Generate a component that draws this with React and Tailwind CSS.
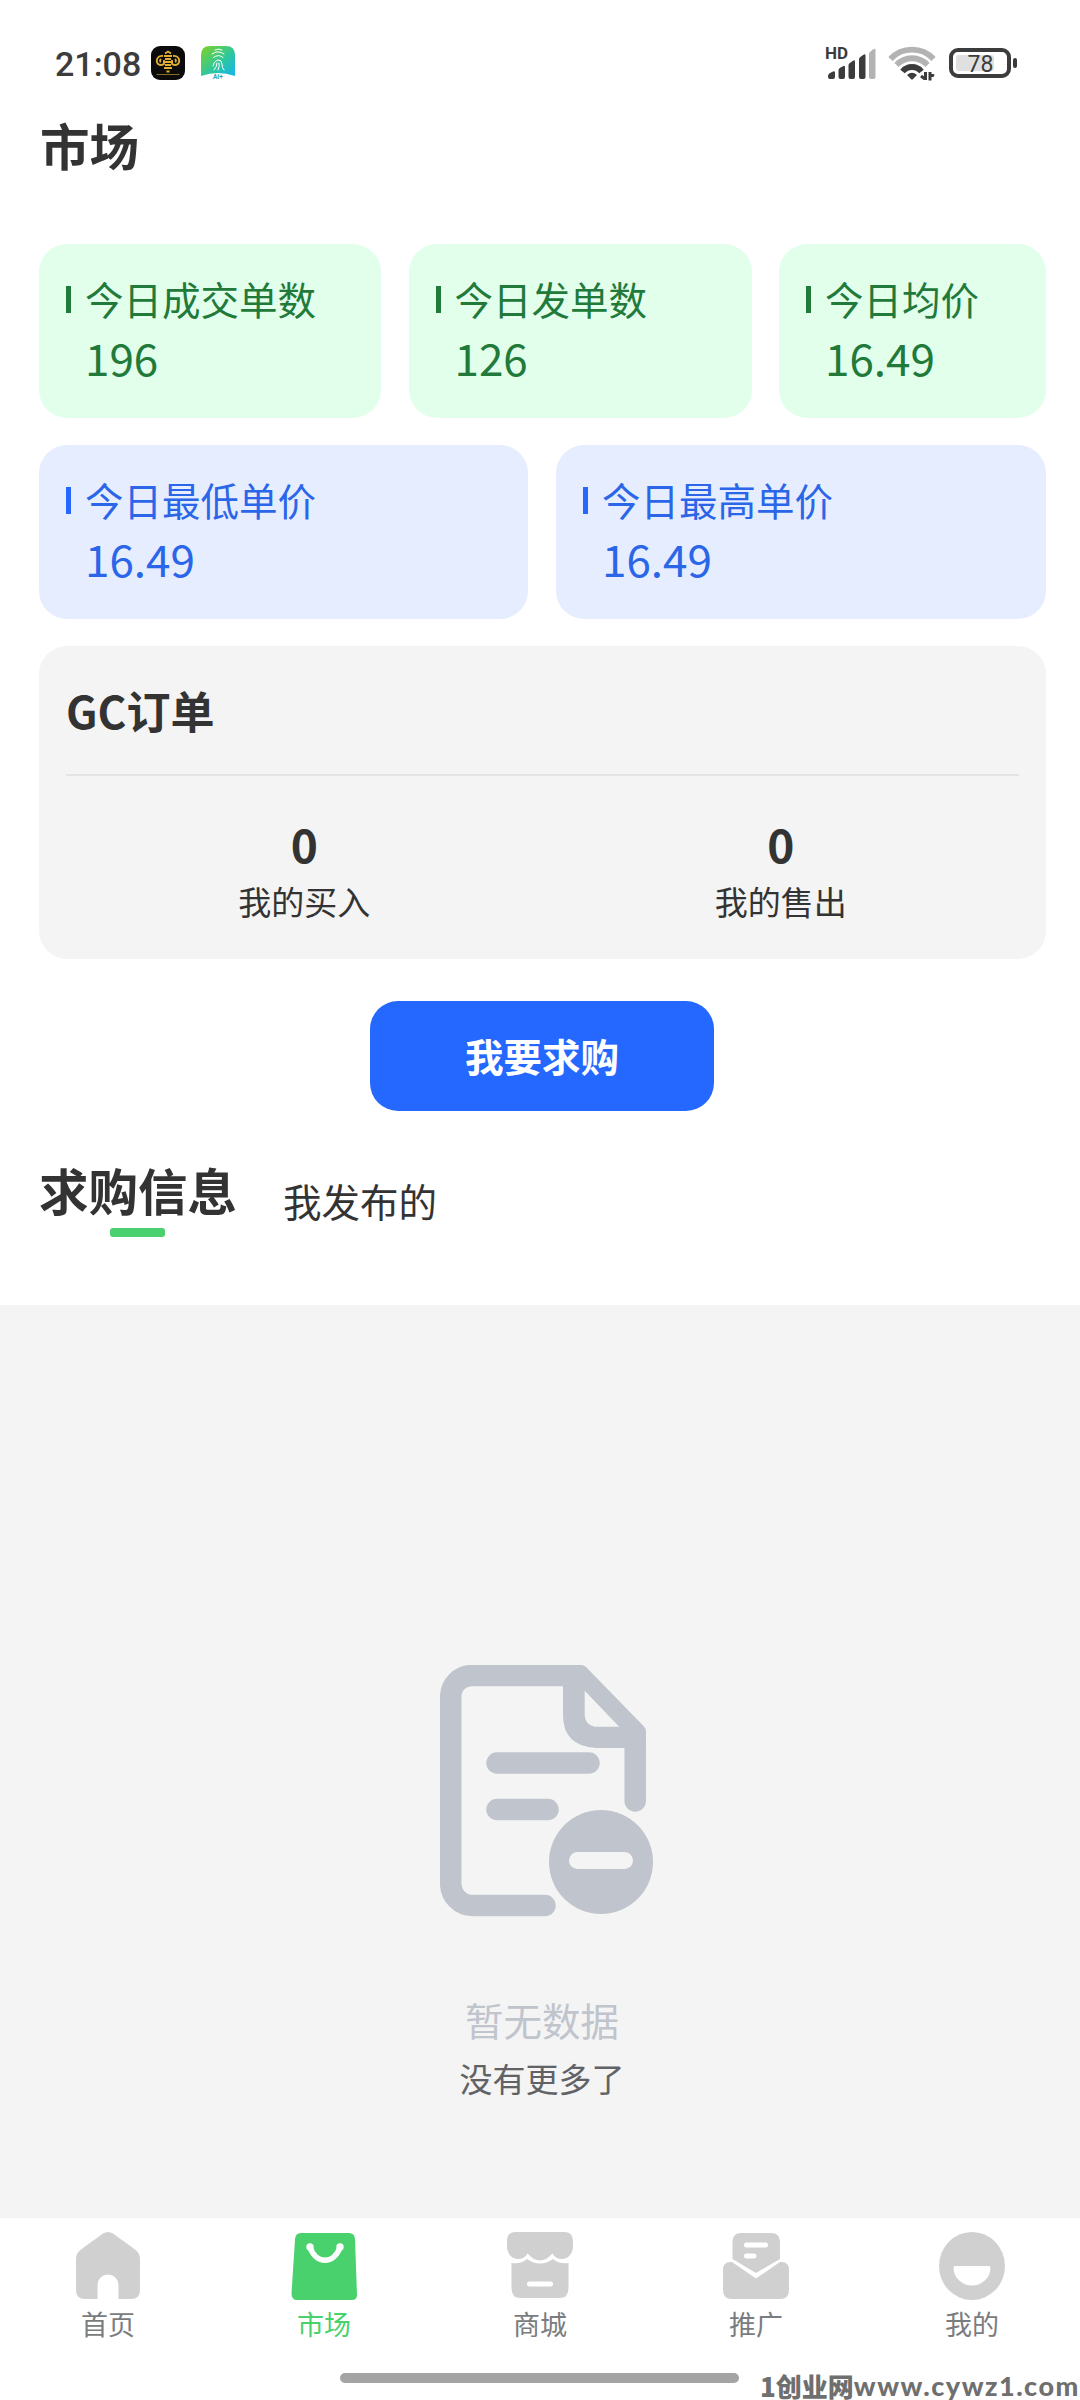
import React, { useState } from 'react';

const greenStats = [
  { label: '今日成交单数', value: '196', width: 'w-[342px]' },
  { label: '今日发单数', value: '126', width: 'w-[343px]' },
  { label: '今日均价', value: '16.49', width: 'w-[267px]' },
];

const blueStats = [
  { label: '今日最低单价', value: '16.49', width: 'w-[489px]' },
  { label: '今日最高单价', value: '16.49', width: 'w-[490px]' },
];

const orders = [
  { label: '我的买入', count: 0 },
  { label: '我的售出', count: 0 },
];

function SignalIcon() {
  return (
    <svg width="56" height="40" viewBox="0 0 56 40" fill="#3c3c3c">
      <text x="4" y="17" fontSize="17" fontWeight="700" fontFamily="Roboto, sans-serif">HD</text>
      <path d="M7 34q0-2 2-3l3-1.500q2-1 2 1V35q0 2-2 2H9q-2 0-2-2z" />
      <path d="M17.500 28q0-1.500 2-2.500l2.500-1.300q2-1 2 1V35q0 2-2 2h-2.500q-2 0-2-2z" />
      <path d="M27.500 23q0-1.500 2-2.500l2.500-1.800q2-1 2 1V35q0 2-2 2h-2.500q-2 0-2-2z" />
      <path d="M38 17q0-1.500 2-2.500l2.500-1.800q2-1 2 1V35q0 2-2 2H40q-2 0-2-2z" />
      <path fill="#b3b3b3" d="M48 12q0-1.500 2-3l2.500-1.800q2-1 2 1V35q0 2-2 2H50q-2 0-2-2z" />
    </svg>
  );
}

function WifiIcon() {
  return (
    <svg width="48" height="40" viewBox="0 0 48 40" fill="none" strokeWidth="5.800">
      <path stroke="#b3b3b3" d="M2.500 17C14 4.500 34 4.500 45.500 17" />
      <path stroke="#b3b3b3" d="M8.500 23C17 14 31 14 39.500 23" />
      <path stroke="#3c3c3c" d="M14.500 29.500C19.500 23.500 28.500 23.500 33.500 29.500" />
      <path fill="#3c3c3c" d="M19 33q5-4.500 10 0l-4 4q-1 1-2 0z" />
      <path stroke="#3c3c3c" strokeWidth="3" d="M37.500 30v8M42 30v8.500M33 34l4 3M42 32l4 2" />
    </svg>
  );
}

function BatteryIcon() {
  return (
    <svg width="70" height="40" viewBox="0 0 70 40">
      <rect x="3" y="8" width="58" height="26" rx="7" fill="none" stroke="#3c3c3c" strokeWidth="4" />
      <rect x="8" y="13" width="38" height="16" rx="3" fill="#e0e0e0" />
      <rect x="65" y="16" width="4" height="10" rx="2" fill="#3c3c3c" />
      <text x="32.500" y="29.500" textAnchor="middle" fontSize="23" fontFamily="Roboto, sans-serif" fill="#3c3c3c">78</text>
    </svg>
  );
}

function BeeAppIcon() {
  return (
    <svg width="34" height="34" viewBox="0 0 34 34" fill="none" stroke="#e0ae32" strokeWidth="1.800">
      <rect width="34" height="34" rx="9" fill="#0b0b0c" stroke="none" />
      <path d="M14 7.500l3-2 3 2M13 10h8M14 13h6M12 16h10M14 19h6M13 22h8M15.500 25.500h3" />
      <path d="M12 10C7 9 4 14 7 18q3 2 6 0v-4M22 10c5-1 8 4 5 8q-3 2-6 0v-4M10 13q-2 2 0 3M24 13q2 2 0 3" />
      <path d="M5.500 28.500h23" strokeWidth=".6" />
    </svg>
  );
}

function FingerprintAppIcon() {
  return (
    <svg width="34" height="34" viewBox="0 0 34 34" fill="none">
      <defs>
        <linearGradient id="finger" x1="0" y1="0" x2="1" y2="1">
          <stop offset="0" stopColor="#7fd321" />
          <stop offset=".55" stopColor="#2fc79b" />
          <stop offset="1" stopColor="#14b4f0" />
        </linearGradient>
      </defs>
      <path d="M9 0h16q9 0 9 9v21Q17 24 0 30V9q0-9 9-9z" fill="url(#finger)" />
      <g stroke="#fff" strokeWidth="1" strokeLinecap="round">
        <path d="M14 4q3.500-2 7 0M11 8q6-4.500 12 0M12.500 11.500q5-4 9.500 0M12 20q1-5 5-6 4 0 4 4 0 4 2 6M13 24q3-3 3-7M18 17q1 3-1 7" />
      </g>
      <text x="12" y="33" fontSize="6.500" fontWeight="700" fontFamily="Roboto, sans-serif" fill="#2aa7a7">AI+</text>
    </svg>
  );
}

function EmptyIcon() {
  return (
    <svg width="214" height="252" viewBox="0 0 214 252" fill="none" stroke="#c0c4cc" strokeWidth="21.500" strokeLinecap="round">
      <path d="M105 240.500H32.500C20 240.500 10.700 230 10.700 219V32C10.700 20 20 10.500 32.500 10.500H134" />
      <path d="M195.200 136V75" />
      {/* folded corner */}
      <path
        fill="#c0c4cc"
        stroke="none"
        fillRule="evenodd"
        d="M123 0h18q3 0 5 2l57.500 59q2.500 2 2.500 6v16H156q-33-2-33-33zM144.700 25.700V51q1 9 10 10.700h24.500z"
      />
      <path d="M57 98h92M57 144.500h51" />
      <circle cx="161" cy="197" r="52" fill="#c0c4cc" stroke="none" />
      <path d="M137.500 195.500h47" stroke="#f4f4f4" strokeWidth="17" />
    </svg>
  );
}

function HomeIcon() {
  return (
    <svg width="66" height="68" viewBox="0 0 66 68" fill="currentColor">
      <path d="M28 1.500q5-3 10 0l22 16q5 4 5 9V58q0 9-9 9H43.500V53a10.500 10.500 0 0 0-21 0v14H10q-9 0-9-9V26.500q0-5 5-9z" />
    </svg>
  );
}

function BagIcon() {
  return (
    <svg width="66" height="68" viewBox="0 0 66 68" fill="currentColor">
      <path d="M10 1h48q5.500 0 6 6L66 63q0 5-5 5H6q-5 0-5.500-6L4 7q.5-6 6-6z" />
      <path d="M19 15.500c6.500 17 23.500 17 30 0" fill="none" stroke="#fff" strokeWidth="5.500" strokeLinecap="round" />
      <circle cx="19" cy="15" r="3.700" fill="#fff" />
      <circle cx="49" cy="15" r="3.700" fill="#fff" />
    </svg>
  );
}

function ShopIcon() {
  return (
    <svg width="66" height="68" viewBox="0 0 66 68" fill="currentColor">
      <path d="M9 0h48q9 0 9 9v5c0 14-15 17-20.500 7.500q-12.500 14-25 0C15 31 0 28 0 14V9q0-9 9-9z" />
      <path d="M4.500 31q9 1.500 15.500-4 13 9 26 0 6.500 5.500 15.500 4v25q0 10-9 10h-39q-9 0-9-10z" />
      <path d="M22.500 52h21" stroke="#fff" strokeWidth="5" strokeLinecap="round" />
    </svg>
  );
}

function MailIcon() {
  return (
    <svg width="66" height="68" viewBox="0 0 66 68" fill="currentColor">
      <path d="M18 1h30q9 0 9 9v17L33 41 9.500 27V10Q9.500 1 18 1z" />
      <path d="M9 30L33 46.500 57 30q9-1 9 8v20q0 9-9 9H9q-9 0-9-9V38q0-9 9-8z" />
      <path d="M23.500 13h19M23.500 24h7.500" stroke="#fff" strokeWidth="5" strokeLinecap="round" />
    </svg>
  );
}

function FaceIcon() {
  return (
    <svg width="66" height="68" viewBox="0 0 66 68" fill="currentColor">
      <ellipse cx="33" cy="34" rx="33" ry="34" />
      <path d="M16.500 34h33q2 0 2 2a18.500 17.500 0 0 1-37 0q0-2 2-2z" fill="#fff" />
    </svg>
  );
}

const navItems = [
  { key: 'home', label: '首页', icon: HomeIcon },
  { key: 'market', label: '市场', icon: BagIcon },
  { key: 'mall', label: '商城', icon: ShopIcon },
  { key: 'promote', label: '推广', icon: MailIcon },
  { key: 'mine', label: '我的', icon: FaceIcon },
];

function StatCard({ item, color }) {
  const isGreen = color === 'green';
  return (
    <div
      className={`h-[174px] rounded-[28px] pt-[30px] pl-[27px] ${item.width} ${
        isGreen ? 'bg-[#e2ffec] text-[#21793a]' : 'bg-[#e6edff] text-[#2b66e8]'
      }`}
    >
      <div className="flex items-center">
        <div className={`w-[5px] h-[27px] mt-0.5 mr-[14px] ${isGreen ? 'bg-[#21793a]' : 'bg-[#2668ff]'}`}></div>
        <span className="text-[38.5px] leading-[49px] whitespace-nowrap">{item.label}</span>
      </div>
      <div className="mt-1 pl-[19px] text-[44px] leading-[60px]">{item.value}</div>
    </div>
  );
}

export default function App() {
  const [activeNav, setActiveNav] = useState('market');

  return (
    <div className="relative w-[1080px] h-[2400px] overflow-hidden flex flex-col bg-white text-[#333333] font-['Noto_Sans_CJK_SC',sans-serif]">
      {/* Status bar */}
      <div className="flex items-center h-[112px] pt-3.5 pl-[55px] pr-[62px] text-[#3c3c3c]">
        <span className="w-[96px] pt-0.5 font-['Roboto',sans-serif] font-medium text-[34px] leading-10">21:08</span>
        <div className="flex gap-4">
          <BeeAppIcon />
          <FingerprintAppIcon />
        </div>
        <div className="flex items-start ml-auto pb-0.5">
          <SignalIcon />
          <div className="ml-[11px]"><WifiIcon /></div>
          <div className="ml-3"><BatteryIcon /></div>
        </div>
      </div>

      {/* Page title */}
      <h1 className="h-[132px] pt-px pl-[40px] text-[49.5px] leading-[63px] font-bold">市场</h1>

      {/* Today stats */}
      <div className="flex flex-col gap-[27px] pl-[39px] pr-[34px]">
        <div className="flex justify-between">
          {greenStats.map((item) => (
            <StatCard key={item.label} item={item} color="green" />
          ))}
        </div>
        <div className="flex justify-between">
          {blueStats.map((item) => (
            <StatCard key={item.label} item={item} color="blue" />
          ))}
        </div>

        {/* Orders */}
        <div className="h-[313px] rounded-[28px] bg-[#f4f4f4] px-[27px]">
          <h2 className="h-[130px] pt-[31px] text-[44px] leading-[66px] font-bold border-b-2 border-[#e4e4e4]">GC订单</h2>
          <div className="flex pt-[35px]">
            {orders.map((order) => (
              <div key={order.label} className="flex-1 flex flex-col items-center">
                <span className="text-[46px] leading-[64px] font-bold">{order.count}</span>
                <span className="mt-[2px] text-[33px] leading-[48px]">{order.label}</span>
              </div>
            ))}
          </div>
        </div>
      </div>

      <button className="w-[344px] h-[110px] mt-[42px] ml-[370px] rounded-[28px] bg-[#2468ff] text-white text-[38.5px] leading-[106px] pb-[3px] font-bold">
        我要求购
      </button>

      {/* Tabs */}
      <div className="flex items-start h-[194px] pt-[47px] pl-[39px]">
        <div className="flex flex-col items-center">
          <span className="text-[49.5px] leading-[63px] font-bold">求购信息</span>
          <div className="w-[55px] h-[9px] mt-[7px] mr-0.5 rounded-[3px] bg-[#4bd06f]"></div>
        </div>
        <span className="mt-[18px] ml-[46px] text-[38.5px] leading-[49px]">我发布的</span>
      </div>

      {/* Empty list */}
      <div className="flex flex-col items-center flex-1 bg-[#f4f4f4] pt-[360px] pl-1">
        <div className="ml-2.5"><EmptyIcon /></div>
        <p className="mt-[76px] text-[38.5px] leading-[53px] text-[#c0c4cc]">暂无数据</p>
        <p className="mt-[12px] text-[33px] leading-[40px] text-[#606266]">没有更多了</p>
      </div>

      {/* Bottom navigation */}
      <nav className="flex h-[155px] pt-3.5 bg-white">
        {navItems.map((item) => {
          const Icon = item.icon;
          const active = activeNav === item.key;
          return (
            <button key={item.key} onClick={() => setActiveNav(item.key)} className="flex-1 flex flex-col items-center">
              <span className={active ? 'text-[#48d16c]' : 'text-[#d0d0d0]'}><Icon /></span>
              <span className={`mt-1.5 text-[27px] leading-[36px] ${active ? 'text-[#48d16c]' : 'text-[#7a7c80]'}`}>{item.label}</span>
            </button>
          );
        })}
      </nav>
      <div className="flex h-[27px] pl-[340px] bg-white">
        <div className="w-[399px] h-2.5 rounded-full bg-[#a4a4a4]"></div>
      </div>

      {/* Watermark over the gesture bar */}
      <div className="absolute left-[760px] top-[2373px] flex items-center whitespace-nowrap text-[26px] leading-[26px] font-bold text-[#6f6f6f]">
        <span className="font-black">1创业网</span>
        <span className="font-['Lato','Noto_Sans_CJK_SC',sans-serif] font-black text-[27px] tracking-[1.5px]">www.cywz1.com</span>
      </div>
    </div>
  );
}
